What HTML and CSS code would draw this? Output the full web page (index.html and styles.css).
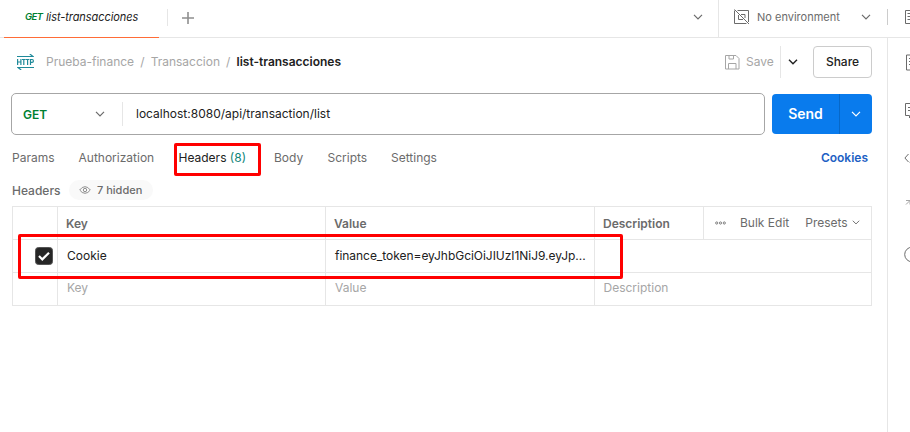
FILE: index.html
```html
<!DOCTYPE html>
<html lang="en">
<head>
<meta charset="utf-8">
<title>list-transacciones</title>
<link rel="stylesheet" href="styles.css">
</head>
<body>
<header class="topbar">
  <div class="tab"><span class="tab-method">GET</span><span class="tab-name">list-transacciones</span></div>
  <div class="new-tab"><svg width="12" height="12" viewBox="0 0 12 12"><path d="M6 0v12M0 6h12" stroke="#8f8f8f" stroke-width="1.6"/></svg></div>
  <div class="tab-menu"><svg class="chev" viewBox="0 0 10 6"><path d="M1 .8l4 4 4-4"/></svg></div>
  <div class="env">
    <svg width="16" height="16" viewBox="0 0 16 16" fill="none" stroke="#6b6b6b"><path d="M3.500 1.500H14.500V13M12.500 14.500H.5V1.500M.5.5l14.500 14.500M4.500 6v4.500H9M7 5.500h4V9"/></svg>
    <span class="env-name">No environment</span>
    <svg class="chev" viewBox="0 0 10 6"><path d="M1 .8l4 4 4-4"/></svg>
  </div>
  <div class="quick"><svg width="16" height="16" viewBox="0 0 16 16" fill="none" stroke="#6b6b6b"><path d="M.5 1.500H13.500V14.500H.5zM2.500 4.500H11M2.500 7.500H11M2.500 10.500H11"/></svg></div>
</header>
<div class="workspace">
  <main class="request">
    <div class="title-row">
      <svg class="http" width="17" height="16" viewBox="0 0 17 16" fill="none" stroke="#1f8a9a" stroke-width="1.200"><path d="M0 2.500H16L12.800 0M17 13.500H1L4.200 16"/><path d="M.6 5v6M3.900 5v6M.6 8h3.300M5 5.500h3.600M6.800 5.500V11M8.900 5.500h3.400M10.600 5.500V11M13.500 11V5.500h1.600q1.300 0 1.300 1.400T15.100 8.300h-1.600"/></svg>
      <nav class="crumbs"><span>Prueba-finance</span><i>/</i><span>Transaccion</span><i>/</i><b>list-transacciones</b></nav>
      <div class="save"><svg width="15" height="15" viewBox="0 0 15 15" fill="none" stroke="#a6a6a6"><path d="M.5.5h10.500l3 3v10.500H.5zM4 .5v3.500h4.500V.5M3.500 14V8.500h7.500V14"/></svg><span>Save</span></div>
      <div class="save-menu"><svg class="chev dark" viewBox="0 0 10 6"><path d="M1 .8l4 4 4-4"/></svg></div>
      <button class="share">Share</button>
    </div>
    <div class="url-row">
      <div class="url-box">
        <div class="method"><span>GET</span><svg class="chev" viewBox="0 0 10 6"><path d="M1 .8l4 4 4-4"/></svg></div>
        <div class="url">localhost:8080/api/transaction/list</div>
      </div>
      <div class="send"><span class="send-label">Send</span><span class="send-menu"><svg class="chev light" viewBox="0 0 10 6"><path d="M1 .8l4 4 4-4"/></svg></span></div>
    </div>
    <div class="tabs">
      <span class="t-params">Params</span><span class="t-auth">Authorization</span><span class="t-headers active">Headers <em>(8)</em><span class="mark mark-tab"></span></span><span class="t-body">Body</span><span class="t-scripts">Scripts</span><span class="t-settings">Settings</span><a class="cookies">Cookies</a>
    </div>
    <div class="sub-row"><span class="sub-title">Headers</span>
      <div class="pill"><svg width="12" height="8" viewBox="0 0 12 8" fill="none" stroke="#8f8f8f"><path d="M.7 4Q3 .7 6 .7T11.300 4Q9 7.300 6 7.300T.7 4z"/><circle cx="6" cy="4" r="1.700"/></svg><span>7 hidden</span></div>
    </div>
    <div class="table">
      <div class="row head"><div></div><div><span>Key</span></div><div><span>Value</span></div><div><span>Description</span></div>
        <div class="actions"><svg width="11" height="4" viewBox="0 0 11 4" fill="none" stroke="#7d7d7d"><circle cx="1.700" cy="2" r="1.100"/><circle cx="5.500" cy="2" r="1.100"/><circle cx="9.300" cy="2" r="1.100"/></svg><span class="bulk">Bulk Edit</span><span class="presets">Presets</span><svg class="chev small" viewBox="0 0 10 6"><path d="M1 .8l4 4 4-4"/></svg></div>
      </div>
      <div class="row"><div class="check"><svg width="18" height="18" viewBox="0 0 18 18"><rect x=".5" y=".5" width="17" height="17" rx="3" fill="#262626" stroke="#555"/><path d="M4 9l3.300 3.400L14 5.700" fill="none" stroke="#fff" stroke-width="2.200"/></svg></div><div><span>Cookie</span></div><div><span class="v-token">finance_token=eyJhbGciOiJIUzI1NiJ9.eyJp...</span></div><div class="wide"></div></div>
      <div class="row ghost"><div></div><div><span>Key</span></div><div><span>Value</span></div><div class="wide"><span>Description</span></div></div>
      <span class="mark mark-row"></span>
    </div>
  </main>
  <aside class="rail">
    <svg width="16" height="17" viewBox="0 0 16 17"><path d="M1.500 1H14V16H1.500zM4 4.500h1M7 4.500h5M4 7.500h1M7 7.500h5M4 10.500h1M7 10.500h5"/></svg>
    <svg width="16" height="16" viewBox="0 0 16 16"><path d="M.5 .5H14V12.500H7L4.500 15V12.500H.5zM3 4.500h8M3 7.500h6"/></svg>
    <svg width="16" height="16" viewBox="0 0 16 16"><path d="M4.500 3L.9 7l3.600 4M13 3l3 4-3 4M6 12l3-10"/></svg>
    <svg class="faint" width="16" height="16" viewBox="0 0 16 16"><path d="M2 1.500h4v4M6 1.500L2 5.500"/></svg>
    <svg width="16" height="16" viewBox="0 0 16 16"><circle cx="8" cy="7.500" r="7.300"/></svg>
  </aside>
</div>
</body>
</html>
```

FILE: styles.css
```css
* { box-sizing: border-box; }
body { margin: 0; width: 910px; height: 432px; overflow: hidden; background: #fff; color: #6b6b6b; font: 12px/16px Inter, "Liberation Sans", sans-serif; }
svg { display: block; flex: none; }
span, b, a { white-space: nowrap; }
.chev { width: 10px; height: 6px; fill: none; stroke: #6b6b6b; stroke-width: 1.2; }
.chev.dark { stroke: #212121; stroke-width: 1.4; }
.chev.light { stroke: #fff; }
.chev.small { width: 8px; height: 5px; }

.topbar { display: flex; height: 38px; border-bottom: 1px solid #e6e6e6; }
.tab { width: 155px; height: 38px; margin-left: 4px; padding: 9px 0 0 21px; border-bottom: 1px solid #ff6c37; display: flex; font-style: italic; color: #212121; }
.tab-method { width: 21px; font-size: 9.5px; font-weight: 600; color: #007f31; letter-spacing: -.6px; }
.tab-name { font-size: 11px; letter-spacing: -.07px; }
.new-tab { margin: 9px 0 0 8px; width: 27px; height: 17px; border-left: 1px solid #e6e6e6; display: flex; align-items: center; justify-content: flex-end; }
.tab-menu { margin-left: auto; width: 25px; padding-top: 14px; }
.env { width: 169px; height: 37px; border-left: 1px solid #e6e6e6; padding: 0 16px 3px 15px; display: flex; align-items: center; }
.env-name { margin-left: 7px; font-size: 11px; }
.env .chev { margin-left: auto; }
.quick { width: 23px; height: 16px; margin-top: 9px; border-left: 1px solid #ccc; padding-left: 17px; overflow: hidden; }

.workspace { display: flex; height: 394px; }
.request { width: 887px; padding: 8px 15px 0 12px; }
.title-row { display: flex; align-items: center; height: 32px; }
.http { margin-left: 5px; }
.crumbs { display: flex; margin-left: 12px; color: #a6a6a6; }
.crumbs i { font-style: normal; width: 16.5px; text-align: center; }
.crumbs b { font-weight: 600; color: #212121; }
.save { display: flex; align-items: center; margin-left: auto; width: 55px; gap: 6px; color: #a6a6a6; }
.save-menu { width: 33px; height: 32px; border-left: 1px solid #e6e6e6; padding: 13px 0 0 7px; }
.share { width: 59px; height: 32px; padding: 0; border: 1px solid #ccc; border-radius: 4px; background: #fff; color: #212121; font: 500 12px/16px Inter, sans-serif; }

.url-row { display: flex; align-items: center; margin: 15px 0 0 -1px; height: 42px; gap: 7px; }
.url-box { display: flex; align-items: center; width: 754px; height: 42px; border: 1px solid #a6a6a6; border-radius: 5px; color: #212121; }
.method { width: 111px; height: 24px; border-right: 1px solid #e6e6e6; display: flex; align-items: center; justify-content: space-between; padding: 0 17px 0 11px; font-weight: 600; color: #007f31; }
.method span { padding-top: 1px; }
.url { margin-left: 13px; }
.send { display: flex; width: 100px; height: 40px; border-radius: 4px; background: #097bed; color: #fff; }
.send-label { width: 67px; text-align: center; font-weight: 600; font-size: 14px; line-height: 40px; }
.send-menu { width: 33px; border-left: 1px solid #0668c9; display: flex; align-items: center; justify-content: center; }

.tabs { display: flex; margin-top: 15px; height: 16px; }
.t-params { width: 66.5px; }
.t-auth { width: 100px; }
.t-headers { position: relative; width: 95.5px; }
.t-body { width: 53.5px; }
.t-scripts { width: 63.5px; }
.active { color: #212121; }
.active em { font-style: normal; color: #0e8579; }
.cookies { margin: 0 4px 0 auto; font-weight: 600; color: #1d5fc4; }
.mark { position: absolute; border: 3px solid #f00; border-radius: 2px; pointer-events: none; }
.mark-tab { left: -5px; top: -7px; width: 87px; height: 33px; }
.sub-row { display: flex; align-items: center; height: 20px; margin-top: 14px; }
.sub-title { width: 57px; padding-top: 1px; font-weight: 550; }
.pill { display: flex; align-items: center; width: 84px; height: 20px; border-radius: 10px; background: #f9f9f9; padding-left: 10px; gap: 6px; font-weight: 550; font-size: 11px; }

.table { position: relative; margin-top: 6px; width: 860px; border: 1px solid #e6e6e6; border-bottom: 0; }
.row { display: grid; grid-template-columns: 44px 268px 269px 109px 1fr; height: 33px; border-bottom: 1px solid #e6e6e6; color: #212121; }
.row > div { display: flex; align-items: center; padding-left: 9px; border-left: 1px solid #e6e6e6; }
.row > div:first-child { border-left: 0; }
.row > .wide { grid-column: span 2; padding-left: 8.5px; }
.v-token { letter-spacing: -.04px; }
.head { color: #6b6b6b; font-weight: 600; }
.head > div { padding: 1px 0 0 8px; }
.head .actions { font-weight: 400; padding: 0 0 1px 11px; }
.bulk { margin-left: 14px; }
.presets { margin: 0 4px 0 16px; }
.row > .check { padding-left: 22px; }
.ghost { color: #a6a6a6; }
.ghost > div { padding-bottom: 2px; }
.mark-row { left: 5px; top: 27px; width: 605px; height: 45px; }

.rail { width: 23px; border-left: 1px solid #e6e6e6; padding: 16px 0 0 17px; overflow: hidden; display: flex; flex-direction: column; gap: 32px; }
.rail svg { fill: none; stroke: #6b6b6b; }
.rail svg:nth-child(n+3) { margin-left: -1px; }
.rail .faint { margin-left: 1px; stroke: #a6a6a6; }
```
